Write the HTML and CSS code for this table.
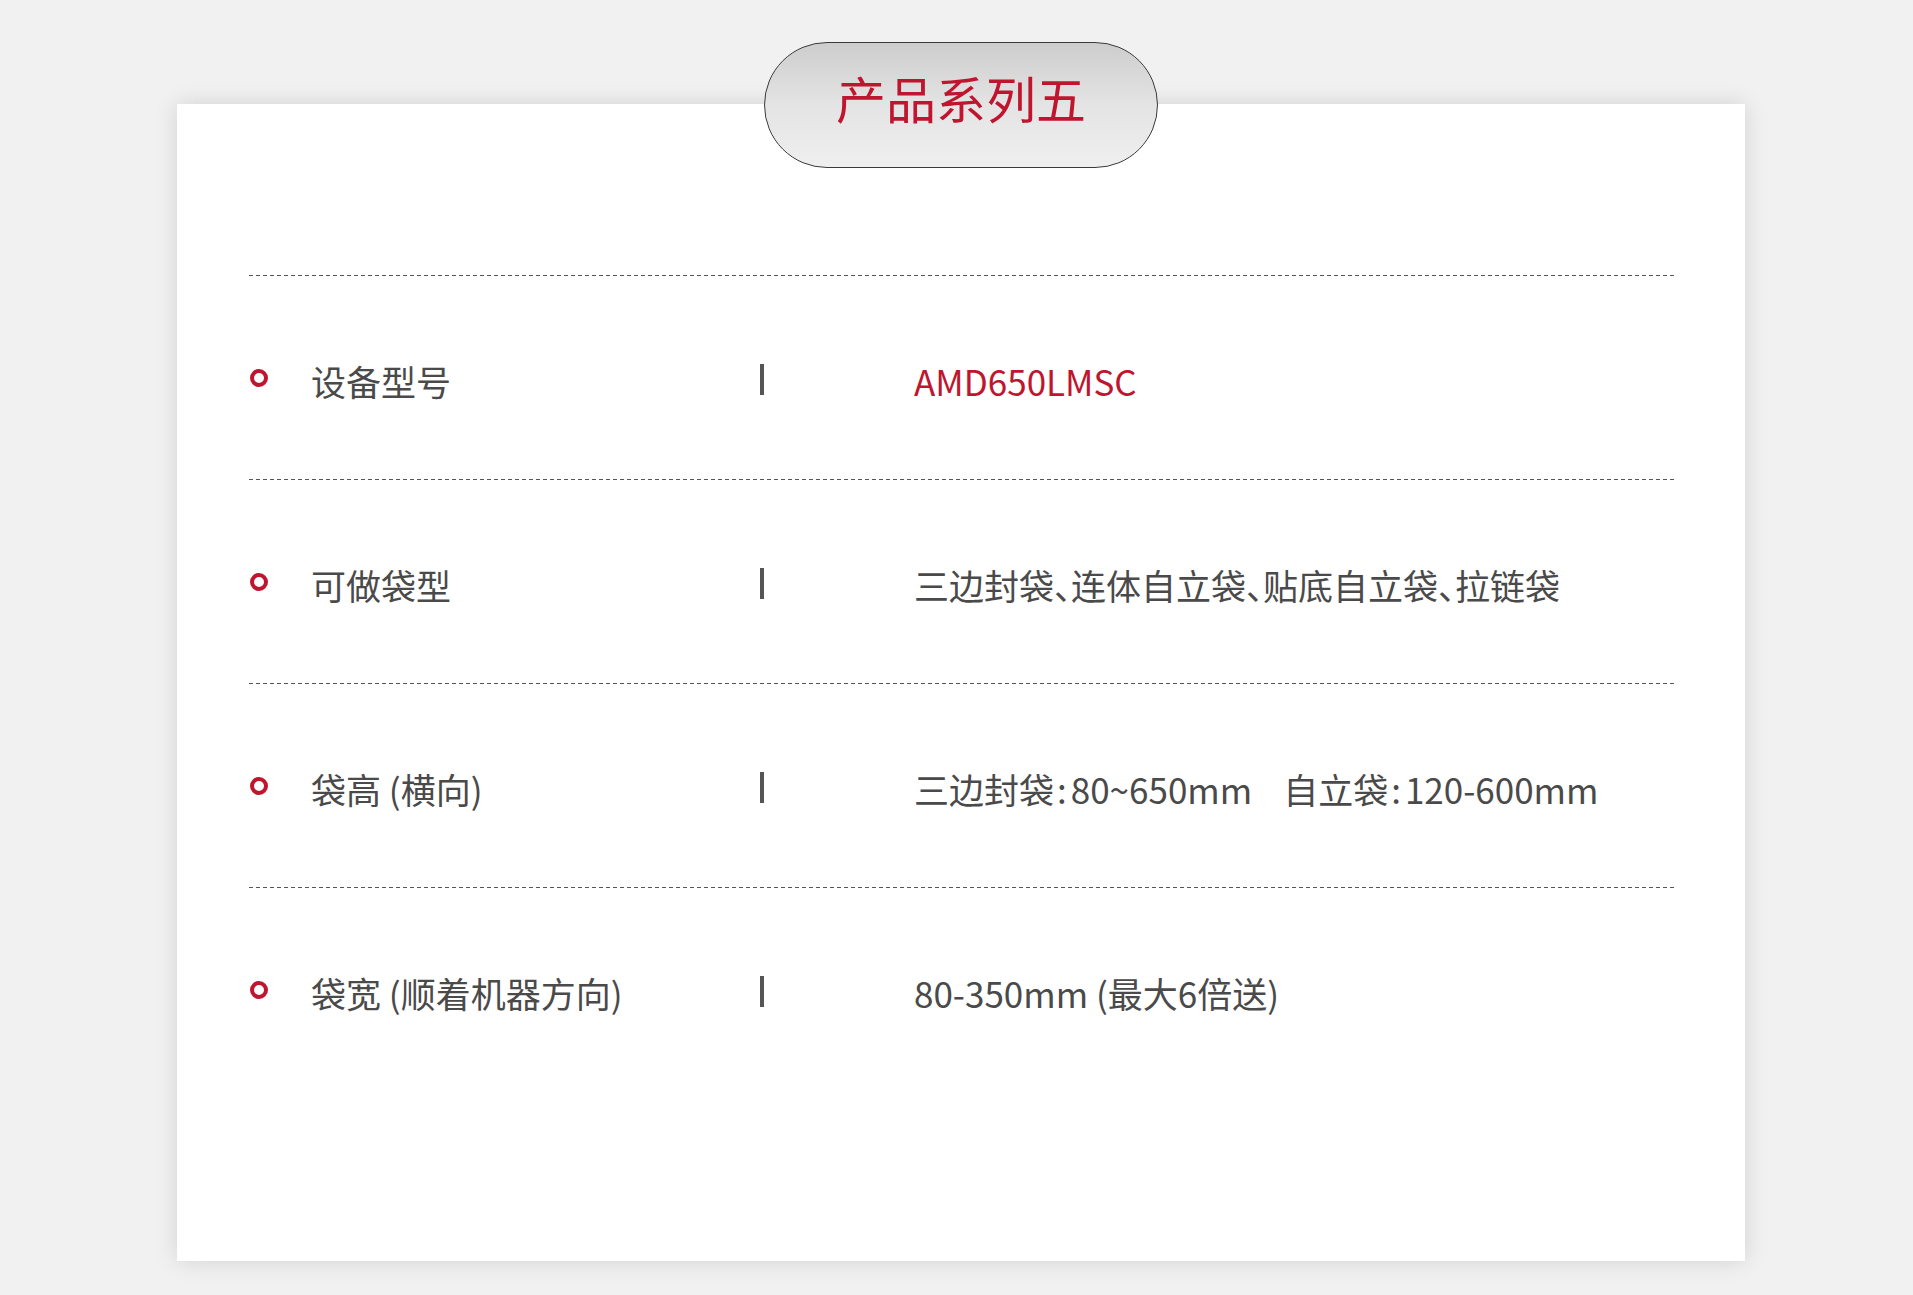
FILE: index.html
```html
<!DOCTYPE html>
<html lang="zh-CN">
<head>
<meta charset="utf-8">
<title>产品系列五</title>
<link rel="stylesheet" href="styles.css">
</head>
<body>
<div class="page">
  <section class="card">
    <div class="badge"><span class="badge-text">产品系列五</span></div>
    <div class="spec">
      <div class="row">
        <span class="dot"></span>
        <span class="label">设备型号</span>
        <span class="sep"></span>
        <span class="value red">AMD650LMSC</span>
      </div>
      <div class="row">
        <span class="dot"></span>
        <span class="label">可做袋型</span>
        <span class="sep"></span>
        <span class="value">三边封袋<span class="comma">、</span>连体自立袋<span class="comma">、</span>贴底自立袋<span class="comma">、</span>拉链袋</span>
      </div>
      <div class="row">
        <span class="dot"></span>
        <span class="label">袋高 (横向)</span>
        <span class="sep"></span>
        <span class="value">三边封袋<span class="colon">:</span>80~650mm<span class="gap">　</span>自立袋<span class="colon">:</span>120-600mm</span>
      </div>
      <div class="row">
        <span class="dot"></span>
        <span class="label">袋宽 (顺着机器方向)</span>
        <span class="sep"></span>
        <span class="value">80-350mm (最大6倍送)</span>
      </div>
    </div>
  </section>
</div>
</body>
</html>
```

FILE: styles.css
```css
* { box-sizing: border-box; }
html, body {
  margin: 0;
  padding: 0;
  background: #f1f1f1;
}
body {
  font-family: "Noto Sans CJK SC", "Noto Sans", sans-serif;
  color: #4a4a4a;
}
.page {
  padding: 104px 0 0 177px;
  height: 1295px;
}
.card {
  position: relative;
  width: 1568px;
  height: 1157px;
  background: #fff;
  box-shadow: 0 0 22px rgba(0, 0, 0, 0.13);
  padding: 171px 68px 0 72px;
}
.badge {
  position: absolute;
  left: 587px;
  top: -62px;
  width: 394px;
  height: 126px;
  border: 1px solid #3a3a3a;
  border-radius: 63px;
  background: linear-gradient(to bottom, #cdcdcd 0%, #e4e4e4 50%, #efefef 100%);
  display: flex;
  align-items: center;
  justify-content: center;
  padding-bottom: 16px;
}
.badge-text {
  font-size: 50px;
  color: #c0152e;
  line-height: 1;
}
.spec {
  display: flex;
  flex-direction: column;
}
.row {
  height: 204px;
  display: flex;
  align-items: center;
  padding-top: 6px;
  background-image: repeating-linear-gradient(to right, #555 0, #555 4px, transparent 4px, transparent 7px);
  background-size: 100% 1px;
  background-repeat: no-repeat;
  background-position: 0 0;
  font-size: 35px;
  line-height: 1;
}
.dot {
  width: 18px;
  height: 18px;
  border: 4px solid #c0152e;
  border-radius: 50%;
  margin-left: 1px;
  margin-right: 43px;
  margin-top: -4px;
  flex: none;
}
.label {
  width: 449px;
  flex: none;
}
.sep {
  width: 4px;
  height: 31px;
  background: #555;
  margin-right: 150px;
  margin-top: -1px;
  flex: none;
}
.value {
  white-space: nowrap;
}
.comma {
  letter-spacing: -18px;
}
.colon {
  margin: 0 4px 0 3px;
}
.gap {
  letter-spacing: -4px;
}
.red {
  color: #c0152e;
}
```
